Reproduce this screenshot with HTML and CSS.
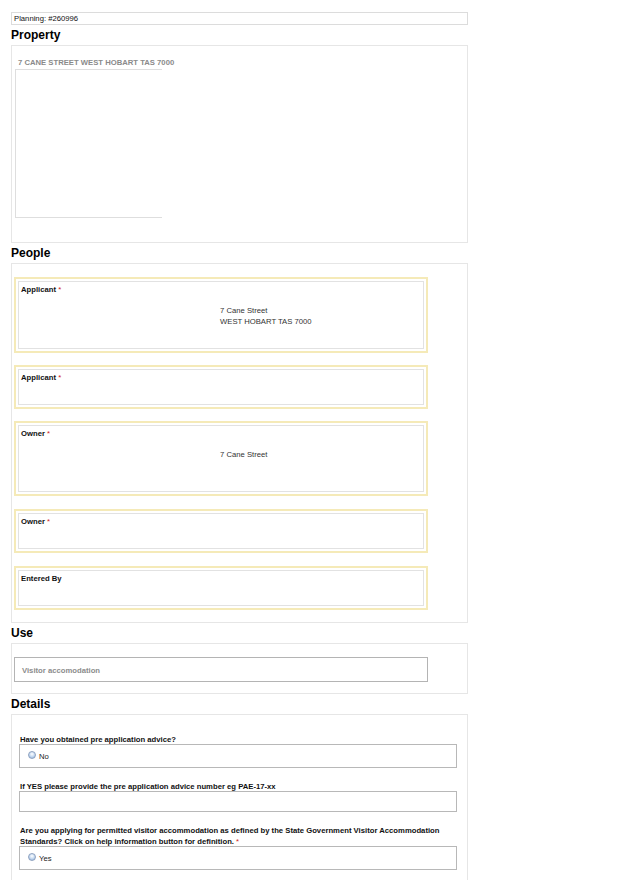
FILE: index.html
```html
<!DOCTYPE html>
<html>
<head>
<meta charset="utf-8">
<title>Planning</title>
<link rel="stylesheet" href="styles.css">
</head>
<body>
<div class="page">
  <div class="planning">Planning: #260996</div>

  <h2 class="section-title">Property</h2>
  <div class="panel property">
    <div class="property-address">7 CANE STREET WEST HOBART TAS 7000</div>
    <div class="map"></div>
  </div>

  <h2 class="section-title">People</h2>
  <div class="panel people">
    <div class="card">
      <div class="card-inner tall">
        <div class="card-label required">Applicant</div>
        <div class="card-address">7 Cane Street<br>WEST HOBART TAS 7000</div>
      </div>
    </div>
    <div class="card">
      <div class="card-inner">
        <div class="card-label required">Applicant</div>
      </div>
    </div>
    <div class="card gap13">
      <div class="card-inner tall2">
        <div class="card-label required">Owner</div>
        <div class="card-address">7 Cane Street</div>
      </div>
    </div>
    <div class="card gap13">
      <div class="card-inner">
        <div class="card-label required">Owner</div>
      </div>
    </div>
    <div class="card">
      <div class="card-inner">
        <div class="card-label">Entered By</div>
      </div>
    </div>
  </div>

  <h2 class="section-title">Use</h2>
  <div class="panel use">
    <div class="use-input">Visitor accomodation</div>
  </div>

  <h2 class="section-title">Details</h2>
  <div class="panel details">
    <div class="field-label">Have you obtained pre application advice?</div>
    <div class="radio-box"><span class="radio"></span><span class="radio-text">No</span></div>

    <div class="field-label spaced">If YES please provide the pre application advice number eg PAE-17-xx</div>
    <div class="text-box"></div>

    <div class="field-label spaced12 multi required">Are you applying for permitted visitor accommodation as defined by the State Government Visitor Accommodation Standards? Click on help information button for definition.</div>
    <div class="radio-box"><span class="radio"></span><span class="radio-text">Yes</span></div>
  </div>
</div>
</body>
</html>
```

FILE: styles.css
```css
* {
  box-sizing: border-box;
}

html, body {
  margin: 0;
  padding: 0;
  background: #ffffff;
}

body {
  font-family: "Liberation Sans", Arial, sans-serif;
  color: #000;
  font-size: 7.7px;
}

.page {
  padding: 12px 0 0 11px;
  width: 468px;
}

.planning {
  height: 13px;
  border: 1px solid #dcdcdc;
  line-height: 11px;
  padding-left: 2px;
  color: #111;
}

.section-title {
  margin: 0;
  height: 20px;
  padding-top: 1px;
  line-height: 19px;
  font-size: 12px;
  font-weight: bold;
  color: #000;
}

.panel {
  border: 1px solid #e6e6e6;
  width: 457px;
}

.required::after {
  content: " *";
  color: #d02020;
  font-weight: normal;
}

/* Property */
.property {
  height: 198px;
  padding: 12px 0 0 3px;
}

.property-address {
  height: 10px;
  line-height: 10px;
  padding-left: 3px;
  margin-bottom: 1px;
  font-weight: bold;
  color: #8a8a8a;
}

.map {
  width: 147px;
  height: 149px;
  border: 1px solid #dedede;
  border-right: none;
}

/* People */
.people {
  height: 360px;
  padding: 13px 0 0 2px;
}

.card {
  width: 414px;
  border: 2px solid #f5eab8;
  padding: 2px;
  margin-bottom: 12px;
}

.card.gap13 {
  margin-bottom: 13px;
}

.card-inner {
  height: 36px;
  border: 1px solid #e2e2e2;
  padding: 3px 2px 2px;
}

.card-inner.tall {
  height: 68px;
}

.card-inner.tall2 {
  height: 67px;
}

.card-label {
  line-height: 10px;
  font-weight: bold;
  color: #111;
}

.card-address {
  margin: 10px 0 0 199px;
  line-height: 11px;
  color: #333;
}

/* Use */
.use {
  height: 51px;
  padding: 13px 0 0 2px;
}

.use-input {
  width: 414px;
  height: 25px;
  border: 1px solid #b4b4b4;
  padding-top: 1px;
  line-height: 23px;
  padding-left: 7px;
  font-weight: bold;
  color: #8c8c8c;
}

/* Details */
.details {
  padding: 19px 10px 40px 7px;
}

.field-label {
  height: 10px;
  padding-top: 1px;
  line-height: 10px;
  padding-left: 1px;
  font-weight: bold;
  color: #111;
}

.field-label.spaced {
  margin-top: 13px;
}

.field-label.spaced12 {
  margin-top: 12px;
}

.field-label.multi {
  height: 22px;
  line-height: 11px;
}

.radio-box {
  height: 24px;
  border: 1px solid #b8b8b8;
  display: flex;
  align-items: center;
  padding-left: 8px;
}

.text-box {
  height: 21px;
  border: 1px solid #b8b8b8;
}

.radio {
  width: 8px;
  height: 8px;
  border-radius: 50%;
  border: 1px solid #8ea2c0;
  background: radial-gradient(circle at 50% 35%, #ffffff 0%, #cddff3 45%, #89acd8 100%);
  margin-right: 3px;
  margin-top: -2px;
}

.radio-text {
  color: #222;
  line-height: 10px;
  margin-top: 2px;
}
```
